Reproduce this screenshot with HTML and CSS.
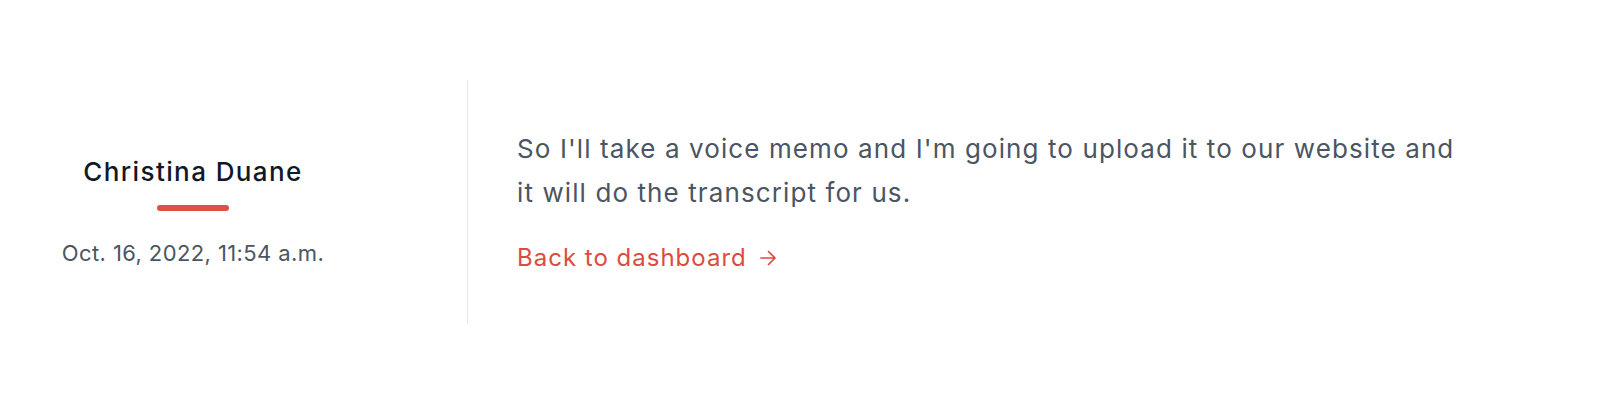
FILE: index.html
```html
<!DOCTYPE html>
<html lang="en">
<head>
<meta charset="utf-8">
<title>Transcript</title>
<link rel="stylesheet" href="styles.css">
</head>
<body>
<section class="entry">
  <div class="author">
    <h2 class="author-name">Christina Duane</h2>
    <span class="author-bar"></span>
    <p class="author-date">Oct. 16, 2022, 11:54 a.m.</p>
  </div>
  <div class="content">
    <p class="content-text">So I'll take a voice memo and I'm going to upload it to our website and it will do the transcript for us.</p>
    <a class="back-link" href="#"><span class="back-label">Back to dashboard</span><svg class="back-arrow" width="16" height="16" viewBox="0 0 16 16" fill="none" stroke="currentColor" stroke-width="1.7" stroke-linecap="round" stroke-linejoin="round"><path d="M1 8h14M8.5 1.5L15 8l-6.5 6.5"/></svg></a>
  </div>
</section>
</body>
</html>
```
FILE: styles.css
```css
* { box-sizing: border-box; }
html, body { margin: 0; padding: 0; background: #ffffff; }
body {
  font-family: Inter, "Noto Sans", "Liberation Sans", sans-serif;
  color: #4b5563;
}
.entry {
  display: flex;
  padding-top: 80px;
}
.author {
  width: 386px;
  margin-right: 81px;
  display: flex;
  flex-direction: column;
  align-items: center;
  padding-top: 76px;
}
.author-name {
  margin: 0;
  font-size: 26px;
  font-weight: 500;
  line-height: 32px;
  letter-spacing: 1.4px;
  color: #111827;
  white-space: nowrap;
}
.author-bar {
  display: block;
  width: 72px;
  height: 6px;
  border-radius: 3px;
  background: #dc5046;
  margin-top: 17px;
}
.author-date {
  margin: 28px 0 0;
  font-size: 22px;
  line-height: 28px;
  letter-spacing: 0.4px;
  color: #4b5563;
  white-space: nowrap;
}
.content {
  height: 244px;
  border-left: 1px solid #e5e7eb;
  padding-left: 49px;
  padding-top: 47px;
  display: flex;
  flex-direction: column;
}
.content-text {
  margin: 0;
  width: 952px;
  font-size: 26px;
  line-height: 44px;
  letter-spacing: 1.1px;
  color: #4b5563;
}
.back-link {
  display: inline-flex;
  align-items: center;
  gap: 13px;
  margin-top: 27px;
  font-size: 24px;
  line-height: 32px;
  letter-spacing: 1px;
  color: #dc4b41;
  text-decoration: none;
  align-self: flex-start;
}
.back-arrow { display: block; }
```
